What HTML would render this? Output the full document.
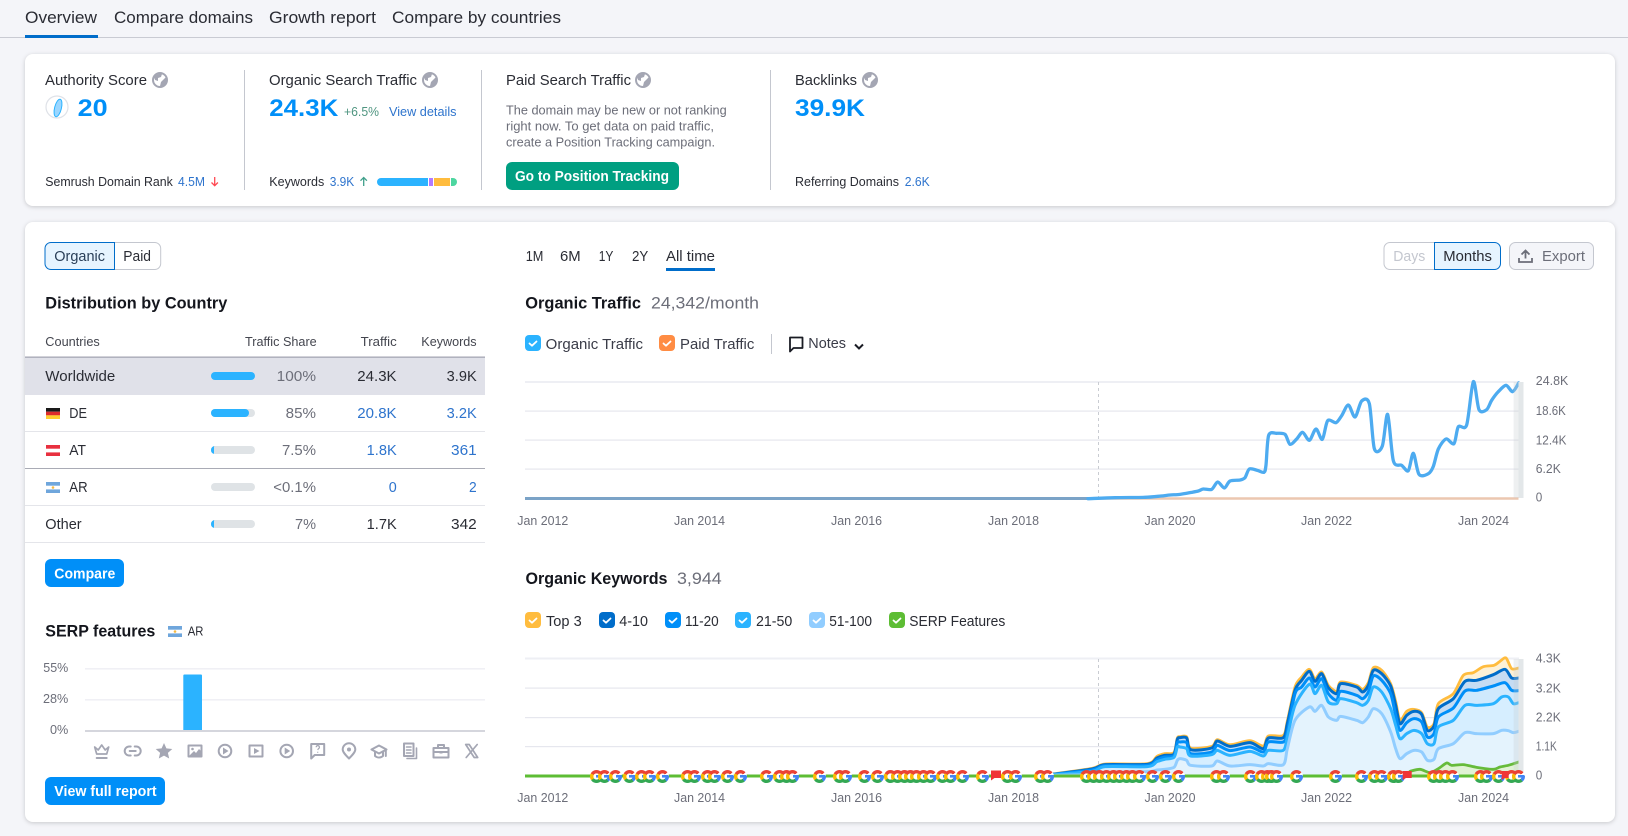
<!DOCTYPE html>
<html lang="en"><head><meta charset="utf-8"><title>Domain Overview</title>
<style>
html,body{margin:0;padding:0;width:1628px;height:836px;overflow:hidden;background:#f4f5f9}
svg{position:absolute;left:0;top:0;display:block}
text{font-family:"Liberation Sans",sans-serif;font-size:14.5px;fill:#2a2c34}
.t{font-size:16.5px}.b{font-size:16.5px;font-weight:700;fill:#14161d}
.s{font-size:12.5px}.g1{fill:#6c6e79}.l{fill:#2e74cd}.w{fill:#fff;font-weight:700}
.n{font-size:24px;font-weight:700;fill:#008ff8}
.i{fill:none;stroke:#a4a6b3;stroke-width:2;stroke-linejoin:round;stroke-linecap:round}
.f{fill:#a4a6b3}
.c{fill:none;stroke:#fff;stroke-width:1.8;stroke-linecap:round;stroke-linejoin:round}
.nv{vector-effect:non-scaling-stroke;stroke-linejoin:round;stroke-linecap:round;fill:none}
i.g{position:absolute;top:769.5px;width:13px;height:13px;margin-left:-6.5px;border-radius:50%;background:linear-gradient(#4285f4,#4285f4) 6.5px 5.2px/6.5px 2.6px no-repeat,radial-gradient(circle,#fff 0 2.9px,transparent 3.3px),conic-gradient(#ea4335 0 50deg,#fff 50deg 85deg,#4285f4 85deg 140deg,#34a853 140deg 235deg,#fbbc05 235deg 300deg,#ea4335 300deg)}
</style></head><body>
<svg width="1628" height="836" viewBox="0 0 1628 836">
<!-- tabs -->
<rect x="0" y="37" width="1628" height="1" fill="#c9cbd3"/>
<rect x="25" y="35" width="73" height="3" fill="#006dca"/>
<text class="t" x="25" y="23" textLength="72" lengthAdjust="spacingAndGlyphs">Overview</text>
<text class="t" x="114" y="23" textLength="139" lengthAdjust="spacingAndGlyphs">Compare domains</text>
<text class="t" x="269" y="23" textLength="107" lengthAdjust="spacingAndGlyphs">Growth report</text>
<text class="t" x="392" y="23" textLength="169" lengthAdjust="spacingAndGlyphs">Compare by countries</text>

<!-- cards -->
<rect x="25" y="54" width="1590" height="152" rx="8" fill="#fff" style="filter:drop-shadow(0 1px 2px rgba(0,0,0,.18))"/>
<rect x="25" y="222" width="1590" height="600" rx="8" fill="#fff" style="filter:drop-shadow(0 1px 2px rgba(0,0,0,.18))"/>

<!-- metrics -->
<rect x="244" y="70" width="1" height="120" fill="#c4c7cf"/>
<rect x="481" y="70" width="1" height="120" fill="#c4c7cf"/>
<rect x="770" y="70" width="1" height="120" fill="#c4c7cf"/>
<text x="45" y="85" textLength="102" lengthAdjust="spacingAndGlyphs">Authority Score</text>
<text x="269" y="85" textLength="148" lengthAdjust="spacingAndGlyphs">Organic Search Traffic</text>
<text x="506" y="85" textLength="125" lengthAdjust="spacingAndGlyphs">Paid Search Traffic</text>
<text x="795" y="85" textLength="62" lengthAdjust="spacingAndGlyphs">Backlinks</text>
<g transform="translate(160 80)"><circle r="7" fill="#fff" stroke="#a4a6b3" stroke-width="2"/><path class="f" d="M-6-3C-3-6 0-7 2-6L1-3-2-2-2 1-5 0ZM6-3 7 2 3 6 0 6 1 2 3 0Z"/></g>
<g transform="translate(430 80)"><circle r="7" fill="#fff" stroke="#a4a6b3" stroke-width="2"/><path class="f" d="M-6-3C-3-6 0-7 2-6L1-3-2-2-2 1-5 0ZM6-3 7 2 3 6 0 6 1 2 3 0Z"/></g>
<g transform="translate(643 80)"><circle r="7" fill="#fff" stroke="#a4a6b3" stroke-width="2"/><path class="f" d="M-6-3C-3-6 0-7 2-6L1-3-2-2-2 1-5 0ZM6-3 7 2 3 6 0 6 1 2 3 0Z"/></g>
<g transform="translate(870 80)"><circle r="7" fill="#fff" stroke="#a4a6b3" stroke-width="2"/><path class="f" d="M-6-3C-3-6 0-7 2-6L1-3-2-2-2 1-5 0ZM6-3 7 2 3 6 0 6 1 2 3 0Z"/></g>
<circle cx="57" cy="107" r="11" fill="#fff" stroke="#dfe2e8" stroke-width="1.2"/>
<ellipse cx="58" cy="108" rx="3.4" ry="9" transform="rotate(14 58 108)" fill="#9ad6ff" stroke="#2bb3ff"/>
<text class="n" x="77.7" y="116" textLength="30" lengthAdjust="spacingAndGlyphs">20</text>
<text class="n" x="269.3" y="116" textLength="69" lengthAdjust="spacingAndGlyphs">24.3K</text>
<text class="n" x="795" y="116" textLength="70" lengthAdjust="spacingAndGlyphs">39.9K</text>
<text class="s" x="344" y="116" textLength="35" lengthAdjust="spacingAndGlyphs" style="fill:#4f9580">+6.5%</text>
<text class="s l" x="389" y="116" textLength="67.5" lengthAdjust="spacingAndGlyphs">View details</text>
<text class="s" x="45.3" y="186" textLength="127.5" lengthAdjust="spacingAndGlyphs">Semrush Domain Rank</text>
<text class="s l" x="178" y="186" textLength="27" lengthAdjust="spacingAndGlyphs">4.5M</text>
<path d="M214.7 177v8.5M211.5 182.5l3.2 3.2 3.2-3.2" fill="none" stroke="#ff4953" stroke-width="1.3"/>
<text class="s" x="269.3" y="186" textLength="55" lengthAdjust="spacingAndGlyphs">Keywords</text>
<text class="s l" x="329.7" y="186" textLength="24.6" lengthAdjust="spacingAndGlyphs">3.9K</text>
<path d="M363.7 186v-8.5M360.5 180.7l3.2-3.2 3.2 3.2" fill="none" stroke="#3f9f8a" stroke-width="1.3"/>
<path d="M381 178H428V186H381a4 4 0 0 1 0-8Z" fill="#2bb3ff"/>
<rect x="429" y="178" width="4" height="8" fill="#b27aff"/>
<rect x="434" y="178" width="16" height="8" fill="#ffbc3e"/>
<path d="M451 178h2a4 4 0 0 1 0 8h-2Z" fill="#4dd6a0"/>
<text class="s g1" x="506" y="114.5" textLength="220.7" lengthAdjust="spacingAndGlyphs">The domain may be new or not ranking</text>
<text class="s g1" x="506" y="130.5" textLength="208" lengthAdjust="spacingAndGlyphs">right now. To get data on paid traffic,</text>
<text class="s g1" x="506" y="146.5" textLength="209" lengthAdjust="spacingAndGlyphs">create a Position Tracking campaign.</text>
<rect x="506" y="162" width="173" height="28" rx="6" fill="#009f81"/>
<text class="w" x="515" y="181" textLength="154" lengthAdjust="spacingAndGlyphs">Go to Position Tracking</text>
<text class="s" x="795" y="186" textLength="104" lengthAdjust="spacingAndGlyphs">Referring Domains</text>
<text class="s l" x="904.7" y="186" textLength="25" lengthAdjust="spacingAndGlyphs">2.6K</text>

<!-- toggle -->
<path d="M114.5 242.5H154.7a6 6 0 0 1 6 6V263.5a6 6 0 0 1-6 6H114.5Z" fill="#fff" stroke="#c4c7cf"/>
<path d="M51 242.5H114.5V269.5H51a6 6 0 0 1-6-6V248.5a6 6 0 0 1 6-6Z" fill="#e6f4ff" stroke="#006dca"/>
<text x="54.3" y="261" textLength="50.7" lengthAdjust="spacingAndGlyphs" style="fill:#2a3f58">Organic</text>
<text x="123.3" y="261" textLength="27.7" lengthAdjust="spacingAndGlyphs">Paid</text>

<text class="b" x="45.3" y="308.5" textLength="182" lengthAdjust="spacingAndGlyphs">Distribution by Country</text>

<!-- table -->
<text class="s" x="45.3" y="346" textLength="54.5" lengthAdjust="spacingAndGlyphs" style="fill:#44464f">Countries</text>
<text class="s" x="245" y="346" textLength="71.7" lengthAdjust="spacingAndGlyphs" style="fill:#44464f">Traffic Share</text>
<text class="s" x="360.7" y="346" textLength="36" lengthAdjust="spacingAndGlyphs" style="fill:#44464f">Traffic</text>
<text class="s" x="421.3" y="346" textLength="55.3" lengthAdjust="spacingAndGlyphs" style="fill:#44464f">Keywords</text>
<rect x="25" y="357" width="460" height="38" fill="#e0e1e9"/>
<rect x="25" y="356.5" width="460" height="1.3" fill="#a4a6b3"/>
<rect x="25" y="431" width="460" height="1" fill="#e4e5ea"/>
<rect x="25" y="468" width="460" height="1" fill="#a9abb5"/>
<rect x="25" y="505" width="460" height="1" fill="#e4e5ea"/>
<rect x="25" y="542" width="460" height="1" fill="#e4e5ea"/>

<text x="45.3" y="381" textLength="70" lengthAdjust="spacingAndGlyphs">Worldwide</text>
<rect x="211" y="372" width="44" height="8" rx="4" fill="#2bb3ff"/>
<text class="g1" x="276.7" y="381" textLength="39.3" lengthAdjust="spacingAndGlyphs">100%</text>
<text x="357.3" y="381" textLength="39.3" lengthAdjust="spacingAndGlyphs">24.3K</text>
<text x="446.7" y="381" textLength="30" lengthAdjust="spacingAndGlyphs">3.9K</text>

<rect x="46" y="408" width="14" height="3.7" fill="#1a1a1a"/><rect x="46" y="411.7" width="14" height="3.7" fill="#dd2c2c"/><rect x="46" y="415.3" width="14" height="3.7" fill="#ffce2e"/>
<text x="69.3" y="418" textLength="17.7" lengthAdjust="spacingAndGlyphs">DE</text>
<rect x="211" y="409" width="44" height="8" rx="4" fill="#dfe3e6"/><rect x="211" y="409" width="38" height="8" rx="4" fill="#2bb3ff"/>
<text class="g1" x="285.7" y="418" textLength="30.3" lengthAdjust="spacingAndGlyphs">85%</text>
<text class="l" x="357.3" y="418" textLength="39.3" lengthAdjust="spacingAndGlyphs">20.8K</text>
<text class="l" x="446.7" y="418" textLength="30" lengthAdjust="spacingAndGlyphs">3.2K</text>

<rect x="46" y="445" width="14" height="11" fill="#e8303f"/><rect x="46" y="448.7" width="14" height="3.7" fill="#fff"/>
<text x="69.3" y="455" textLength="16.7" lengthAdjust="spacingAndGlyphs">AT</text>
<rect x="211" y="446" width="44" height="8" rx="4" fill="#dfe3e6"/><path d="M215 446a4 4 0 0 0-4 4 4 4 0 0 0 3 3.9V446Z" fill="#2bb3ff"/>
<text class="g1" x="282" y="455" textLength="34" lengthAdjust="spacingAndGlyphs">7.5%</text>
<text class="l" x="366.7" y="455" textLength="30" lengthAdjust="spacingAndGlyphs">1.8K</text>
<text class="l" x="451" y="455" textLength="25.7" lengthAdjust="spacingAndGlyphs">361</text>

<rect x="46" y="482" width="14" height="11" fill="#6fa6dc"/><rect x="46" y="485.7" width="14" height="3.7" fill="#fff"/><circle cx="53" cy="487.5" r="1.3" fill="#f5b941"/>
<text x="69.3" y="492" textLength="18.3" lengthAdjust="spacingAndGlyphs">AR</text>
<rect x="211" y="483" width="44" height="8" rx="4" fill="#dfe3e6"/>
<text class="g1" x="273.3" y="492" textLength="42.7" lengthAdjust="spacingAndGlyphs">&lt;0.1%</text>
<text class="l" x="388.7" y="492" textLength="8" lengthAdjust="spacingAndGlyphs">0</text>
<text class="l" x="469" y="492" textLength="7.7" lengthAdjust="spacingAndGlyphs">2</text>

<text x="45.3" y="529" textLength="36.3" lengthAdjust="spacingAndGlyphs">Other</text>
<rect x="211" y="520" width="44" height="8" rx="4" fill="#dfe3e6"/><path d="M215 520a4 4 0 0 0-4 4 4 4 0 0 0 3 3.9V520Z" fill="#2bb3ff"/>
<text class="g1" x="295" y="529" textLength="21" lengthAdjust="spacingAndGlyphs">7%</text>
<text x="366.7" y="529" textLength="30" lengthAdjust="spacingAndGlyphs">1.7K</text>
<text x="451" y="529" textLength="25.7" lengthAdjust="spacingAndGlyphs">342</text>

<rect x="45" y="559" width="79" height="28" rx="6" fill="#008ff8"/>
<text class="w" x="54.3" y="578.3" textLength="61" lengthAdjust="spacingAndGlyphs">Compare</text>

<!-- SERP -->
<text class="b" x="45.3" y="636.5" textLength="110" lengthAdjust="spacingAndGlyphs">SERP features</text>
<rect x="168" y="626" width="14" height="11" fill="#6fa6dc"/><rect x="168" y="629.7" width="14" height="3.7" fill="#fff"/><circle cx="175" cy="631.5" r="1.3" fill="#f5b941"/>
<text class="s" x="187.7" y="635.5" textLength="15.7" lengthAdjust="spacingAndGlyphs">AR</text>
<text class="s g1" x="43.3" y="672" textLength="25" lengthAdjust="spacingAndGlyphs">55%</text>
<text class="s g1" x="43" y="703" textLength="25.3" lengthAdjust="spacingAndGlyphs">28%</text>
<text class="s g1" x="50" y="734" textLength="18.3" lengthAdjust="spacingAndGlyphs">0%</text>
<rect x="85" y="668" width="400" height="1.6" fill="#f0f0f5"/>
<rect x="85" y="699" width="400" height="1.6" fill="#f0f0f5"/>
<rect x="183.3" y="674.5" width="18.7" height="56.5" rx="1" fill="#2bb3ff"/>
<rect x="85" y="730" width="400" height="2" fill="#d5d6dd"/>

<!-- SERP icons -->
<g transform="translate(101.7 751)"><path class="i" d="M-7-4-3.5-1 0-6 3.5-1 7-4 5 3H-5Z" style="stroke-width:1.7"/><path class="i" d="M-5 7H5"/></g>
<g transform="translate(132.7 751)"><path class="i" d="M-2-4.5H-3.5a4.5 4.5 0 0 0 0 9H-2M2-4.5H3.5a4.5 4.5 0 0 1 0 9H2M-3 0H3"/></g>
<g transform="translate(164 751)"><path class="f" d="M0-8 2.4-2.6 8.3-2 3.9 1.9 5.2 7.500 0 4.600-5.200 7.500-3.900 1.900-8.300-2-2.400-2.600Z"/></g>
<g transform="translate(195 751)"><rect class="i" x="-6.500" y="-5.500" width="13" height="11"/><path class="f" d="M-6 5-1 0 1 2 4-2 6 0V5Z"/><circle class="f" cx="-2.500" cy="-2" r="1.300"/></g>
<g transform="translate(225 751)"><circle class="i" r="6.300"/><path class="f" d="M-2-3.500 3.500 0-2 3.500Z"/></g>
<g transform="translate(256 751)"><rect class="i" x="-6.500" y="-5.500" width="13" height="11"/><path class="f" d="M-2-3 3.500 0-2 3Z"/></g>
<g transform="translate(286.700 751)"><circle class="i" r="6.300"/><path class="f" d="M-2-3.500 3.500 0-2 3.500Z"/></g>
<g transform="translate(317.700 751)"><path class="i" d="M-6.500-7H6.500V4H-3L-6.500 7.500Z"/><path d="M-1.500-3.800a1.600 1.600 0 1 1 2.200 1.500L0-1M0 .8V1.700" fill="none" stroke="#a4a6b3" stroke-width="1.200"/></g>
<g transform="translate(349 751)"><path class="i" d="M0 7.500C-3.500 4-6.300 1-6.300-1.500a6.300 6.300 0 0 1 12.600 0C6.300 1 3.500 4 0 7.500Z"/><circle class="f" cy="-1.500" r="2"/></g>
<g transform="translate(379 751)"><path class="i" d="M-7.500-1.500 0-5.500 7.500-1.500 0 2.500Z"/><path class="i" d="M-4 1V5C-1.500 7 1.500 7 4 5V1M6.800-1V5"/></g>
<g transform="translate(410 751)"><path class="i" d="M-6-7.500H3.500V5H-6Z"/><path class="i" d="M-3.500-4H1M-3.500-1H1M-3.500 2H1M6.500-3V7.500H-3" style="stroke-width:1.600"/></g>
<g transform="translate(441 751)"><path class="i" d="M-7.500-3H7.500V6.500H-7.500ZM-3-3V-6H3V-3M-7.500 1H7.500"/><path class="f" d="M-1.500 0H1.500V2.500H-1.500Z"/></g>
<g transform="translate(471.700 751)"><path class="i" d="M-6-6.500H-2.500L6 6.500H2.500Z" style="stroke-width:1.700"/><path class="i" d="M5.500-6.500-5.500 6.500" style="stroke-width:1.700"/></g>

<rect x="45" y="777" width="120" height="28" rx="6" fill="#008ff8"/>
<text class="w" x="54.3" y="796" textLength="102.3" lengthAdjust="spacingAndGlyphs">View full report</text>

<!-- period -->
<text x="525.7" y="261" textLength="17.7" lengthAdjust="spacingAndGlyphs">1M</text>
<text x="560" y="261" textLength="20.7" lengthAdjust="spacingAndGlyphs">6M</text>
<text x="598.7" y="261" textLength="14.7" lengthAdjust="spacingAndGlyphs">1Y</text>
<text x="632" y="261" textLength="16.3" lengthAdjust="spacingAndGlyphs">2Y</text>
<text x="666" y="261" textLength="49" lengthAdjust="spacingAndGlyphs">All time</text>
<rect x="666" y="268" width="49" height="3" fill="#006dca"/>

<!-- right buttons -->
<path d="M1434.5 242.5H1390a6 6 0 0 0-6 6V263.5a6 6 0 0 0 6 6H1434.5Z" fill="#fff" stroke="#c4c7cf"/>
<path d="M1434.5 242.5H1494.5a6 6 0 0 1 6 6V263.5a6 6 0 0 1-6 6H1434.5Z" fill="#e6f4ff" stroke="#006dca"/>
<text x="1393.3" y="261" textLength="32" lengthAdjust="spacingAndGlyphs" style="fill:#c4c7cf">Days</text>
<text x="1443.3" y="261" textLength="48.7" lengthAdjust="spacingAndGlyphs">Months</text>
<rect x="1509.5" y="242.5" width="84" height="27" rx="6" fill="#f4f5f9" stroke="#c4c7cf"/>
<path d="M1525.5 258.500V251M1521.500 254.500l4-4 4 4M1519 258v4H1532V258" fill="none" stroke="#6c6e79" stroke-width="1.800"/>
<text class="g1" x="1542" y="261" textLength="43" lengthAdjust="spacingAndGlyphs">Export</text>

<!-- Organic Traffic header -->
<text class="b" x="525.3" y="308.5" textLength="115.7" lengthAdjust="spacingAndGlyphs">Organic Traffic</text>
<text class="t g1" x="651" y="308.5" textLength="108" lengthAdjust="spacingAndGlyphs">24,342/month</text>
<rect x="525" y="335" width="16" height="16" rx="4" fill="#2bb3ff"/><path class="c" d="M529.5 343.5l2.5 2.200 4.500-4.200"/>
<text x="545.7" y="349" textLength="97.3" lengthAdjust="spacingAndGlyphs" style="fill:#3a3c48">Organic Traffic</text>
<rect x="659" y="335" width="16" height="16" rx="4" fill="#ff8c43"/><path class="c" d="M663.5 343.5l2.5 2.200 4.500-4.200"/>
<text x="680" y="349" textLength="74.3" lengthAdjust="spacingAndGlyphs" style="fill:#3a3c48">Paid Traffic</text>
<rect x="771" y="334" width="1" height="20" fill="#c4c7cf"/>
<path d="M790 337.5H802.5V348H793.5L790 351.5Z" fill="none" stroke="#1a1c24" stroke-width="1.800" stroke-linejoin="round"/>
<text x="808.3" y="348" textLength="37.7" lengthAdjust="spacingAndGlyphs" style="fill:#3a3c48">Notes</text>
<path d="M855 344.5l4 4 4-4" fill="none" stroke="#1a1c24" stroke-width="2"/>

<!-- Chart 1 -->
<g fill="#e6e7ee">
<rect x="525" y="381" width="994" height="2" fill="#eeeff4"/>
<rect x="525" y="410.5" width="994" height="1.2"/>
<rect x="525" y="439.5" width="994" height="1.2"/>
<rect x="525" y="468.5" width="994" height="1.2"/>
</g>
<path d="M1098.5 382V498" stroke="#c9ccd2" stroke-width="1" stroke-dasharray="3 3" fill="none"/>
<path d="M1095 498.5H1518.5" stroke="#ecc7b0" stroke-width="2.500" fill="none"/>
<path d="M525 498.5H1092" stroke="#7ba3c7" stroke-width="3" fill="none"/>
<g transform="translate(1180 375) scale(.33333)">
<path class="nv sm" stroke="#4dabf0" stroke-width="3.300" d="M-276 371L-195 368 -105 367 -57 363 -30 360 0 358 35 352 55 348 70 342 95 343 113 321 133 339 150 318 180 315 195 308 208 282 232 286 252 292 258 270 266 181 290 175 315 178 330 208 350 192 368 172 388 196 408 162 427 193 443 137 468 143 485 122 505 90 525 126 545 78 568 86 583 221 607 213 623 118 640 257 665 271 685 287 700 235 717 298 745 296 760 274 775 222 798 192 822 206 835 155 860 150 880 20 897 104 920 104 935 76 955 50 978 31 998 50 1016 24"/>
</g>
<rect x="1513.6" y="382" width="5" height="116" fill="#c8ced2" opacity=".3"/>
<rect x="1518.5" y="382" width="5" height="116" fill="#e3e7e9"/>
<text class="s g1" x="1535.8" y="385.2" textLength="32.5" lengthAdjust="spacingAndGlyphs">24.8K</text>
<text class="s g1" x="1535.8" y="415" textLength="30" lengthAdjust="spacingAndGlyphs">18.6K</text>
<text class="s g1" x="1535.8" y="444.4" textLength="30.6" lengthAdjust="spacingAndGlyphs">12.4K</text>
<text class="s g1" x="1535.8" y="473" textLength="25" lengthAdjust="spacingAndGlyphs">6.2K</text>
<text class="s g1" x="1535.8" y="501.7" textLength="6.5" lengthAdjust="spacingAndGlyphs">0</text>
<text class="s g1" x="517.3" y="525" textLength="51" lengthAdjust="spacingAndGlyphs">Jan 2012</text>
<text class="s g1" x="674" y="525" textLength="51" lengthAdjust="spacingAndGlyphs">Jan 2014</text>
<text class="s g1" x="831" y="525" textLength="51" lengthAdjust="spacingAndGlyphs">Jan 2016</text>
<text class="s g1" x="988" y="525" textLength="51" lengthAdjust="spacingAndGlyphs">Jan 2018</text>
<text class="s g1" x="1144.5" y="525" textLength="51" lengthAdjust="spacingAndGlyphs">Jan 2020</text>
<text class="s g1" x="1301" y="525" textLength="51" lengthAdjust="spacingAndGlyphs">Jan 2022</text>
<text class="s g1" x="1458" y="525" textLength="51" lengthAdjust="spacingAndGlyphs">Jan 2024</text>

<!-- Keywords header -->
<text class="b" x="525.5" y="584" textLength="142" lengthAdjust="spacingAndGlyphs">Organic Keywords</text>
<text class="t g1" x="677" y="584" textLength="44.7" lengthAdjust="spacingAndGlyphs">3,944</text>
<rect x="525" y="612" width="16" height="16" rx="4" fill="#ffbc3e"/><path class="c" d="M529.5 620.5l2.5 2.200 4.500-4.200"/>
<text x="546" y="626" textLength="35.7" lengthAdjust="spacingAndGlyphs">Top 3</text>
<rect x="599" y="612" width="16" height="16" rx="4" fill="#006dca"/><path class="c" d="M603.5 620.5l2.5 2.200 4.500-4.200"/>
<text x="619.3" y="626" textLength="28.7" lengthAdjust="spacingAndGlyphs">4-10</text>
<rect x="665" y="612" width="16" height="16" rx="4" fill="#008ff8"/><path class="c" d="M669.5 620.5l2.5 2.200 4.500-4.200"/>
<text x="685" y="626" textLength="33.7" lengthAdjust="spacingAndGlyphs">11-20</text>
<rect x="735" y="612" width="16" height="16" rx="4" fill="#2bb3ff"/><path class="c" d="M739.5 620.5l2.5 2.200 4.500-4.200"/>
<text x="756" y="626" textLength="36.3" lengthAdjust="spacingAndGlyphs">21-50</text>
<rect x="809" y="612" width="16" height="16" rx="4" fill="#91cdff"/><path class="c" d="M813.5 620.5l2.5 2.200 4.500-4.200"/>
<text x="829.3" y="626" textLength="42.7" lengthAdjust="spacingAndGlyphs">51-100</text>
<rect x="889" y="612" width="16" height="16" rx="4" fill="#5dbd34"/><path class="c" d="M893.5 620.5l2.5 2.200 4.500-4.200"/>
<text x="909.3" y="626" textLength="96" lengthAdjust="spacingAndGlyphs">SERP Features</text>

<!-- Chart 2 -->
<g fill="#e6e7ee">
<rect x="525" y="657.5" width="994" height="2" fill="#eeeff4"/>
<rect x="525" y="687.5" width="994" height="1.2"/>
<rect x="525" y="717" width="994" height="1.2"/>
<rect x="525" y="746" width="994" height="1.2"/>
</g>
<path d="M1098.5 659V776" stroke="#c9ccd2" stroke-width="1" stroke-dasharray="3 3" fill="none"/>
<g transform="translate(1180 652) scale(.33333)">
<path id="f0" fill="#fdf1d6" d="M-391 372L-391 367 -264 349 -224 336 -98 335 -69 313 -46 305 -18 301 -8 258 0 254 20 254 32 288 95 283 112 263 150 278 210 266 250 282 265 252 310 250 322 207 345 105 365 75 388 52 405 80 425 60 445 100 470 118 482 90 530 100 548 112 565 92 580 47 605 55 632 95 647 148 660 205 680 178 702 172 725 182 742 225 762 215 775 155 820 125 850 70 880 62 910 44 942 40 960 28 978 18 995 50 1016 48 1016 372Z"/>
<path id="f1" fill="#c5dcf3" d="M-391 372L-391 368 -264 351 -224 338 -98 337 -69 318 -46 310 -18 306 -8 262 0 257 20 258 32 293 95 288 112 267 150 283 210 272 250 290 265 258 310 257 322 215 345 115 365 85 388 58 405 88 425 65 445 107 470 125 482 95 530 105 548 120 565 100 580 55 605 65 632 102 647 160 660 215 680 190 702 178 725 187 742 235 762 222 775 170 820 140 855 88 890 85 940 68 975 52 995 78 1016 78 1016 372Z"/>
<path id="f2" fill="#cfe9fd" d="M-391 372L-391 368 -264 354 -224 341 -98 340 -69 323 -46 315 -18 311 -8 272 0 270 20 272 32 305 95 300 112 280 150 296 210 285 250 300 265 270 310 270 322 240 345 125 365 105 388 78 405 105 425 80 445 125 470 145 482 118 530 130 548 140 565 120 580 72 605 85 632 125 647 190 660 235 680 212 702 200 725 210 742 255 762 245 775 195 820 168 855 117 890 115 940 102 975 92 995 115 1016 116 1016 372Z"/>
<path id="f3" fill="#d6eeff" d="M-391 372L-391 369 -264 358 -224 344 -98 344 -69 329 -46 322 -18 316 -8 285 0 285 20 290 32 312 95 308 112 295 150 310 210 298 250 312 265 295 310 295 322 255 345 160 388 97 405 125 425 100 445 150 470 155 482 140 530 152 548 160 565 145 580 105 605 120 632 170 647 220 660 260 680 245 702 235 725 245 742 275 762 275 775 225 820 205 855 160 890 160 940 155 965 135 985 135 1000 155 1016 152 1016 372Z"/>
<path id="f4" fill="#e4f3fd" d="M-391 372L-391 370 -264 368 -224 362 -98 359 -69 354 -46 352 -18 346 -8 325 0 320 20 325 32 340 95 342 112 327 150 342 210 338 250 342 265 335 310 338 322 290 345 205 388 165 405 178 425 160 445 195 470 205 482 193 530 205 548 212 565 195 580 170 605 185 632 240 647 290 660 320 680 305 702 295 725 300 742 325 762 322 775 290 820 275 855 242 890 245 940 245 965 235 985 236 1000 242 1016 238 1016 372Z"/>
<path id="f5" fill="#e0f2d4" d="M690 372L690 358 720 352 750 362 775 350 800 333 815 340 850 338 890 346 940 352 960 345 985 340 1016 330 1016 372Z"/>
<path id="s0" class="nv sm" stroke="#ffbc3e" stroke-width="2.800" d="M-391 367L-264 349 -224 336 -98 335 -69 313 -46 305 -18 301 -8 258 0 254 20 254 32 288 95 283 112 263 150 278 210 266 250 282 265 252 310 250 322 207 345 105 365 75 388 52 405 80 425 60 445 100 470 118 482 90 530 100 548 112 565 92 580 47 605 55 632 95 647 148 660 205 680 178 702 172 725 182 742 225 762 215 775 155 820 125 850 70 880 62 910 44 942 40 960 28 978 18 995 50 1016 48"/>
<path id="s1" class="nv sm" stroke="#006dca" stroke-width="3" d="M-391 368L-264 351 -224 338 -98 337 -69 318 -46 310 -18 306 -8 262 0 257 20 258 32 293 95 288 112 267 150 283 210 272 250 290 265 258 310 257 322 215 345 115 365 85 388 58 405 88 425 65 445 107 470 125 482 95 530 105 548 120 565 100 580 55 605 65 632 102 647 160 660 215 680 190 702 178 725 187 742 235 762 222 775 170 820 140 855 88 890 85 940 68 975 52 995 78 1016 78"/>
<path id="s2" class="nv sm" stroke="#008ff8" stroke-width="3" d="M-391 368L-264 354 -224 341 -98 340 -69 323 -46 315 -18 311 -8 272 0 270 20 272 32 305 95 300 112 280 150 296 210 285 250 300 265 270 310 270 322 240 345 125 365 105 388 78 405 105 425 80 445 125 470 145 482 118 530 130 548 140 565 120 580 72 605 85 632 125 647 190 660 235 680 212 702 200 725 210 742 255 762 245 775 195 820 168 855 117 890 115 940 102 975 92 995 115 1016 116"/>
<path id="s3" class="nv sm" stroke="#2bb3ff" stroke-width="3" d="M-391 369L-264 358 -224 344 -98 344 -69 329 -46 322 -18 316 -8 285 0 285 20 290 32 312 95 308 112 295 150 310 210 298 250 312 265 295 310 295 322 255 345 160 388 97 405 125 425 100 445 150 470 155 482 140 530 152 548 160 565 145 580 105 605 120 632 170 647 220 660 260 680 245 702 235 725 245 742 275 762 275 775 225 820 205 855 160 890 160 940 155 965 135 985 135 1000 155 1016 152"/>
<path id="s4" class="nv sm" stroke="#91cdff" stroke-width="3" d="M-391 370L-264 368 -224 362 -98 359 -69 354 -46 352 -18 346 -8 325 0 320 20 325 32 340 95 342 112 327 150 342 210 338 250 342 265 335 310 338 322 290 345 205 388 165 405 178 425 160 445 195 470 205 482 193 530 205 548 212 565 195 580 170 605 185 632 240 647 290 660 320 680 305 702 295 725 300 742 325 762 322 775 290 820 275 855 242 890 245 940 245 965 235 985 236 1000 242 1016 238"/>
<path id="s5" class="nv sm" stroke="#66bb3a" stroke-width="2.800" d="M690 358L720 352 750 362 775 350 800 333 815 340 850 338 890 346 940 352 960 345 985 340 1016 330"/>
</g>
<path d="M525 776H1518.5" stroke="#5dbd34" stroke-width="3" fill="none"/>
<rect x="1513.6" y="659" width="5" height="118" fill="#c8ced2" opacity=".3"/>
<rect x="1518.5" y="659" width="5" height="118" fill="#e3e7e9"/>
<text class="s g1" x="1535.8" y="662.4" textLength="25" lengthAdjust="spacingAndGlyphs">4.3K</text>
<text class="s g1" x="1535.8" y="692.4" textLength="25" lengthAdjust="spacingAndGlyphs">3.2K</text>
<text class="s g1" x="1535.8" y="721.4" textLength="25" lengthAdjust="spacingAndGlyphs">2.2K</text>
<text class="s g1" x="1535.8" y="750.4" textLength="21" lengthAdjust="spacingAndGlyphs">1.1K</text>
<text class="s g1" x="1535.8" y="779.4" textLength="6.5" lengthAdjust="spacingAndGlyphs">0</text>
<text class="s g1" x="517.3" y="802" textLength="51" lengthAdjust="spacingAndGlyphs">Jan 2012</text>
<text class="s g1" x="674" y="802" textLength="51" lengthAdjust="spacingAndGlyphs">Jan 2014</text>
<text class="s g1" x="831" y="802" textLength="51" lengthAdjust="spacingAndGlyphs">Jan 2016</text>
<text class="s g1" x="988" y="802" textLength="51" lengthAdjust="spacingAndGlyphs">Jan 2018</text>
<text class="s g1" x="1144.5" y="802" textLength="51" lengthAdjust="spacingAndGlyphs">Jan 2020</text>
<text class="s g1" x="1301" y="802" textLength="51" lengthAdjust="spacingAndGlyphs">Jan 2022</text>
<text class="s g1" x="1458" y="802" textLength="51" lengthAdjust="spacingAndGlyphs">Jan 2024</text>
</svg>

<i class="g" style="left:596px"></i><i class="g" style="left:604px"></i><i class="g" style="left:615.7px"></i><i class="g" style="left:629px"></i><i class="g" style="left:641.7px"></i><i class="g" style="left:649px"></i><i class="g" style="left:662px"></i><i class="g" style="left:687.7px"></i><i class="g" style="left:694.3px"></i><i class="g" style="left:707.3px"></i><i class="g" style="left:714px"></i><i class="g" style="left:727px"></i><i class="g" style="left:740px"></i><i class="g" style="left:766.7px"></i><i class="g" style="left:779.3px"></i><i class="g" style="left:786px"></i><i class="g" style="left:792.7px"></i><i class="g" style="left:819px"></i><i class="g" style="left:839px"></i><i class="g" style="left:845.7px"></i><i class="g" style="left:864.7px"></i><i class="g" style="left:877.3px"></i><i class="g" style="left:890.7px"></i><i class="g" style="left:897.3px"></i><i class="g" style="left:904px"></i><i class="g" style="left:910.7px"></i><i class="g" style="left:916.7px"></i><i class="g" style="left:923.3px"></i><i class="g" style="left:930px"></i><i class="g" style="left:942.7px"></i><i class="g" style="left:950px"></i><i class="g" style="left:962.7px"></i><i class="g" style="left:982.3px"></i><i class="g" style="left:1007.7px"></i><i class="g" style="left:1015px"></i><i class="g" style="left:1040px"></i><i class="g" style="left:1047.8px"></i><i class="g" style="left:1086px"></i><i class="g" style="left:1093px"></i><i class="g" style="left:1099.5px"></i><i class="g" style="left:1106.4px"></i><i class="g" style="left:1113px"></i><i class="g" style="left:1119.4px"></i><i class="g" style="left:1126.3px"></i><i class="g" style="left:1132.8px"></i><i class="g" style="left:1139.7px"></i><i class="g" style="left:1152.3px"></i><i class="g" style="left:1165.3px"></i><i class="g" style="left:1178.7px"></i><i class="g" style="left:1216.7px"></i><i class="g" style="left:1223.3px"></i><i class="g" style="left:1250px"></i><i class="g" style="left:1261.7px"></i><i class="g" style="left:1267.3px"></i><i class="g" style="left:1271.7px"></i><i class="g" style="left:1276.7px"></i><i class="g" style="left:1296px"></i><i class="g" style="left:1335px"></i><i class="g" style="left:1361.7px"></i><i class="g" style="left:1374px"></i><i class="g" style="left:1381px"></i><i class="g" style="left:1393.3px"></i><i class="g" style="left:1398.3px"></i><i class="g" style="left:1433.3px"></i><i class="g" style="left:1439.3px"></i><i class="g" style="left:1445.7px"></i><i class="g" style="left:1452.7px"></i><i class="g" style="left:1480px"></i><i class="g" style="left:1486px"></i><i class="g" style="left:1498.3px"></i><i class="g" style="left:1511.7px"></i><i class="g" style="left:1518.3px"></i>

<svg width="1628" height="836" viewBox="0 0 1628 836" style="pointer-events:none">
<path d="M991 770.5H1001V778H994.5L991 780.5Z" fill="#f03437"/>
<path d="M1402.700 771H1411.700V778H1406L1402.700 780Z" fill="#f03437"/>
<path d="M1501.700 771H1508.700V778H1504.500L1501.700 780Z" fill="#f03437"/>
</svg>
<script>
(function(){
function pts(d){var n=d.match(/-?\d+(\.\d+)?/g).map(Number),p=[];for(var i=0;i+1<n.length;i+=2)p.push([n[i],n[i+1]]);return p}
function sm(p,move){var k=1/7,s=(move?'M':'L')+p[0][0]+' '+p[0][1];for(var i=0;i<p.length-1;i++){var a=p[Math.max(i-1,0)],b=p[i],c=p[i+1],e=p[Math.min(i+2,p.length-1)];
s+='C'+(b[0]+(c[0]-a[0])*k).toFixed(1)+' '+(b[1]+(c[1]-a[1])*k).toFixed(1)+' '+(c[0]-(e[0]-b[0])*k).toFixed(1)+' '+(c[1]-(e[1]-b[1])*k).toFixed(1)+' '+c[0]+' '+c[1]}return s}
var l=document.querySelectorAll('path.sm');
for(var i=0;i<l.length;i++){var el=l[i],p=pts(el.getAttribute('d')),d=sm(p,true);el.setAttribute('d',d);
if(el.id){var f=document.getElementById('f'+el.id.slice(1));if(f){f.setAttribute('d','M'+p[0][0]+' 372'+sm(p,false)+'L'+p[p.length-1][0]+' 372Z')}}}
})();
</script>
</body></html>
